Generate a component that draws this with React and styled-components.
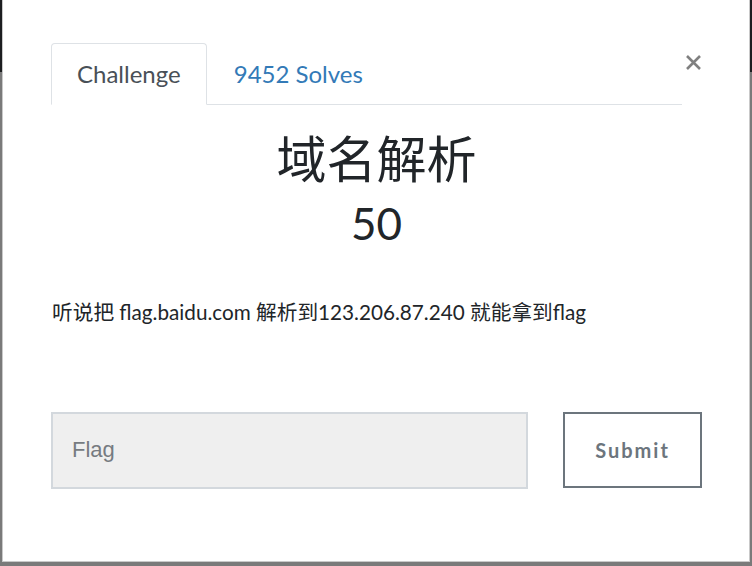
import styled, { createGlobalStyle } from 'styled-components'

const GlobalStyle = createGlobalStyle`
  html, body {
    margin: 0;
    padding: 0;
  }
  body {
    font-family: Lato, "Noto Sans CJK SC", sans-serif;
    color: #212529;
    overflow: hidden;
  }
`

const Backdrop = styled.div`
  height: 566px;
  box-sizing: border-box;
  padding: 0 2px 4px 2px;
  background: linear-gradient(#1c1e20 0 72px, #7a7a7a 72px);
`

const Modal = styled.div`
  height: 100%;
  box-sizing: border-box;
  background: #fff;
  border: 1px solid #c9c9c9;
  border-top: 0;
  padding: 43px 47px 0 48px;
`

const Header = styled.div`
  display: flex;
  align-items: flex-start;
`

const Tabs = styled.ul`
  flex: 1;
  display: flex;
  list-style: none;
  margin: 0;
  padding: 0;
  border-bottom: 1px solid #dee2e6;
`

const Tab = styled.li`
  box-sizing: border-box;
  height: 62px;
  margin-bottom: -1px;
  padding: 0 ${p => (p.$active ? '25px' : '26px')} 2px;
  display: flex;
  align-items: center;
  font-size: 24px;
  color: ${p => (p.$active ? '#495057' : '#337ab7')};
  background: ${p => (p.$active ? '#fff' : 'transparent')};
  border: 1px solid ${p => (p.$active ? '#dee2e6' : 'transparent')};
  border-bottom-color: ${p => (p.$active ? '#fff' : 'transparent')};
  border-radius: 4px 4px 0 0;
  cursor: pointer;
`

const Close = styled.button`
  width: 20px;
  margin: 11px 0 0 0;
  padding: 0;
  border: 0;
  background: none;
  color: #808080;
  cursor: pointer;
  display: flex;
  justify-content: flex-end;
`

const Title = styled.h2`
  margin: 24px 0 0;
  text-align: center;
  font-size: 50px;
  font-weight: 400;
  line-height: 1.2;
`

const Value = styled.h3`
  margin: 8px 0 0;
  text-align: center;
  font-size: 44px;
  font-weight: 400;
  line-height: 1.2;
`

const Description = styled.p`
  margin: 47px 0 0 1px;
  font-size: 20.7px;
  line-height: 1.5;
`

const Form = styled.form`
  display: grid;
  grid-template-columns: 477px 1fr;
  gap: 35px;
  margin-top: 84px;
`

const FlagInput = styled.input`
  box-sizing: border-box;
  height: 77px;
  padding: 0 19px;
  font-family: "Liberation Sans", Arial, sans-serif;
  font-size: 22px;
  color: #495057;
  background: #efefef;
  border: 2px solid #d3d8dd;
  outline: none;
  &::placeholder {
    color: #767b81;
  }
`

const SubmitButton = styled.button`
  box-sizing: border-box;
  height: 76px;
  font-family: Lato, sans-serif;
  font-size: 20px;
  font-weight: 700;
  letter-spacing: 2px;
  color: #6c757d;
  background: #fff;
  border: 2px solid #6c757d;
  cursor: pointer;
`

export default function App() {
  return (
    <>
      <GlobalStyle />
      <Backdrop>
        <Modal>
          <Header>
            <Tabs>
              <Tab $active>Challenge</Tab>
              <Tab>9452 Solves</Tab>
            </Tabs>
            <Close aria-label="Close">
              <svg width="17" height="17" viewBox="0 0 17 17">
                <path d="M2 2L15 15M15 2L2 15" stroke="currentColor" strokeWidth="2.6" />
              </svg>
            </Close>
          </Header>
          <Title>域名解析</Title>
          <Value>50</Value>
          <Description>听说把 flag.baidu.com 解析到123.206.87.240 就能拿到flag</Description>
          <Form onSubmit={e => e.preventDefault()}>
            <FlagInput placeholder="Flag" />
            <SubmitButton type="submit">Submit</SubmitButton>
          </Form>
        </Modal>
      </Backdrop>
    </>
  )
}
